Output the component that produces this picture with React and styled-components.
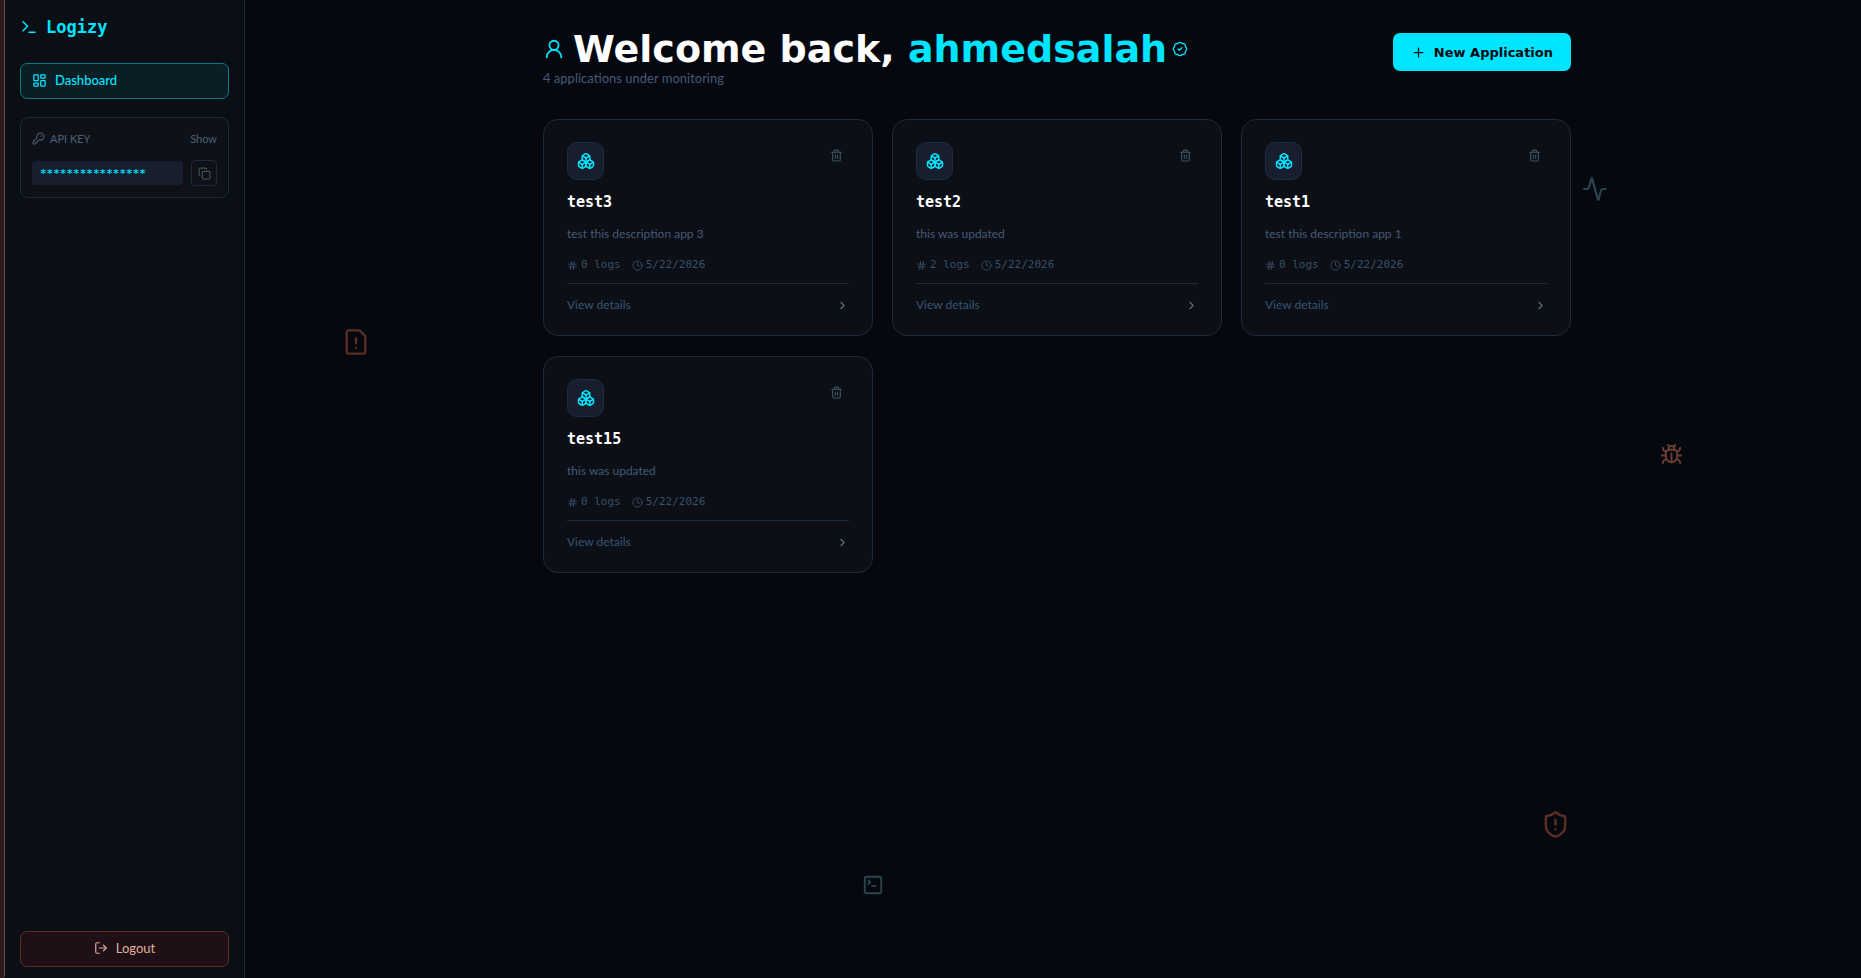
import React, { useState } from 'react';
import styled, { createGlobalStyle } from 'styled-components';
import {
  Activity,
  BadgeCheck,
  Boxes,
  Bug,
  ChevronRight,
  Clock,
  Copy,
  FileWarning,
  Hash,
  KeyRound,
  LayoutDashboard,
  LogOut,
  Plus,
  ShieldAlert,
  SquareTerminal,
  Terminal,
  Trash2,
  UserRound,
} from 'lucide-react';

const applications = [
  { id: 1, name: 'test3', description: 'test this description app 3', logs: 0, date: '5/22/2026' },
  { id: 2, name: 'test2', description: 'this was updated', logs: 2, date: '5/22/2026' },
  { id: 3, name: 'test1', description: 'test this description app 1', logs: 0, date: '5/22/2026' },
  { id: 4, name: 'test15', description: 'this was updated', logs: 0, date: '5/22/2026' },
];

const AppCard = ({ app }) => (
  <Card>
    <CardTop>
      <IconBox>
        <Boxes size={18} />
      </IconBox>
      <DeleteButton type='button' aria-label={`Delete ${app.name}`}>
        <Trash2 size={13} />
      </DeleteButton>
    </CardTop>
    <CardTitle>{app.name}</CardTitle>
    <Description>{app.description}</Description>
    <Meta>
      <MetaItem>
        <Hash size={11} />
        {app.logs} logs
      </MetaItem>
      <MetaItem>
        <Clock size={11} />
        {app.date}
      </MetaItem>
    </Meta>
    <DetailsLink href='#details'>
      View details
      <ChevronRight size={13} />
    </DetailsLink>
  </Card>
);

const App = () => {
  const [visible, setVisible] = useState(false);

  return (
    <>
      <GlobalStyle />
      <Page>
        <EdgeStrip />
        <Sidebar>
          <Logo>
            <Terminal size={18} />
            Logizy
          </Logo>
          <NavLink href='#dashboard'>
            <LayoutDashboard size={15} />
            Dashboard
          </NavLink>
          <KeyPanel>
            <KeyHeader>
              <KeyLabel htmlFor='api-key'>
                <KeyRound size={13} />
                API KEY
              </KeyLabel>
              <ShowButton type='button' onClick={() => setVisible(!visible)}>
                {visible ? 'Hide' : 'Show'}
              </ShowButton>
            </KeyHeader>
            <KeyRow>
              <KeyInput id='api-key' readOnly value='****************' />
              <CopyButton type='button' aria-label='Copy API key'>
                <Copy size={13} />
              </CopyButton>
            </KeyRow>
          </KeyPanel>
          <LogoutButton type='button'>
            <LogOut size={14} />
            Logout
          </LogoutButton>
        </Sidebar>

        <Main>
          <Content>
            <Header>
              <div>
                <Title>
                  <UserRound size={22} />
                  <TitleText>
                    Welcome back, <UserName>ahmedsalah</UserName>
                  </TitleText>
                  <BadgeCheck size={16} />
                </Title>
                <Subtitle>{applications.length} applications under monitoring</Subtitle>
              </div>
              <NewButton type='button'>
                <Plus size={15} />
                New Application
              </NewButton>
            </Header>
            <Grid>
              {applications.map((app) => (
                <AppCard key={app.id} app={app} />
              ))}
            </Grid>
          </Content>
        </Main>

        <Floating $x='18.4%' $y='33.5%' $color='#5c2f26'>
          <FileWarning size={28} />
        </Floating>
        <Floating $x='85%' $y='18%' $color='#2b444e'>
          <Activity size={26} />
        </Floating>
        <Floating $x='89.2%' $y='45.3%' $color='#6b3e34'>
          <Bug size={23} />
        </Floating>
        <Floating $x='82.8%' $y='82.8%' $color='#5c2f26'>
          <ShieldAlert size={29} />
        </Floating>
        <Floating $x='46.3%' $y='89.4%' $color='#2b444e'>
          <SquareTerminal size={22} />
        </Floating>
      </Page>
    </>
  );
};

const sans = "Lato, 'Open Sans', sans-serif";
const mono = "'DejaVu Sans Mono', 'Liberation Mono', monospace";
const wide = "'DejaVu Sans', Inter, sans-serif";

const GlobalStyle = createGlobalStyle`
  * {
    box-sizing: border-box;
  }

  body {
    margin: 0;
    background: #05080f;
    font-family: ${sans};
  }

  h1, h2, p {
    margin: 0;
  }

  button, input {
    font-family: inherit;
  }

  button {
    cursor: pointer;
  }

  svg {
    flex-shrink: 0;
  }
`;

const Page = styled.div`
  position: relative;
  display: flex;
  min-height: 100vh;
  overflow: hidden;
`;

const EdgeStrip = styled.div`
  width: 5px;
  background: #2e191b;
  border-right: 1px solid #6b4b4a;
  border-bottom-right-radius: 2px;
`;

const Sidebar = styled.aside`
  display: flex;
  flex-direction: column;
  width: 240px;
  padding: 15px;
  padding-bottom: 11px;
  background: #0a0f16;
  border-right: 1px solid #1b2a3d;
`;

const Logo = styled.div`
  display: flex;
  align-items: center;
  gap: 8px;
  height: 24px;
  margin-bottom: 24px;
  color: #00e5ff;
  font: 700 17px/24px ${mono};
`;

const NavLink = styled.a`
  display: flex;
  align-items: center;
  gap: 8px;
  height: 36px;
  margin-bottom: 18px;
  padding: 0 11px 2px;
  border: 1px solid #0b7684;
  border-radius: 7px;
  background: #0a1e24;
  color: #00e5ff;
  font-size: 13px;
  font-weight: 500;
  text-decoration: none;
`;

const KeyPanel = styled.section`
  padding: 10px 11px 11px;
  border: 1px solid #1b2a3d;
  border-radius: 8px;
  background: #0e1118;
`;

const KeyHeader = styled.div`
  display: flex;
  align-items: center;
  justify-content: space-between;
  height: 20px;
  margin-bottom: 12px;
`;

const KeyLabel = styled.label`
  display: flex;
  align-items: center;
  gap: 5px;
  color: #4a6075;
  font-size: 11px;
`;

const ShowButton = styled.button`
  padding: 0;
  border: none;
  background: none;
  color: #4a6075;
  font-size: 11px;
`;

const KeyRow = styled.div`
  display: flex;
  align-items: center;
  gap: 8px;
`;

const KeyInput = styled.input`
  flex: 1;
  min-width: 0;
  height: 24px;
  padding: 0 8px;
  border: none;
  border-radius: 4px;
  outline: none;
  background: #171f2e;
  color: #00d5ee;
  font-family: ${mono};
  font-size: 11px;
  font-weight: 700;
`;

const CopyButton = styled.button`
  display: flex;
  align-items: center;
  justify-content: center;
  width: 26px;
  height: 26px;
  padding: 0;
  border: 1px solid #1b2a3d;
  border-radius: 4px;
  background: none;
  color: #42555f;
`;

const LogoutButton = styled.button`
  display: flex;
  align-items: center;
  justify-content: center;
  gap: 8px;
  height: 36px;
  margin-top: auto;
  padding: 0 8px 2px;
  border: 1px solid #5f2f25;
  border-radius: 7px;
  background: #1e1016;
  color: #e0ae9c;
  font-size: 13px;
`;

const Main = styled.main`
  flex: 1;
  padding: 33px 32px 32px 40px;
`;

const Content = styled.div`
  max-width: 1028px;
  margin: 0 auto;
`;

const Header = styled.header`
  display: flex;
  align-items: flex-start;
  justify-content: space-between;
  margin-bottom: 32px;
`;

const Title = styled.h1`
  display: flex;
  align-items: center;
  gap: 5px;
  height: 32px;
  color: #fff;
  font: 700 38px/32px ${wide};
  white-space: nowrap;

  svg {
    color: #00e5ff;
  }
`;

const TitleText = styled.span`
  margin-left: 3px;
`;

const UserName = styled.span`
  color: #00e5ff;
`;

const Subtitle = styled.p`
  margin-top: 4px;
  color: #455a78;
  font-size: 13px;
  line-height: 18px;
`;

const NewButton = styled.button`
  display: flex;
  align-items: center;
  gap: 8px;
  height: 38px;
  padding: 0 18px;
  border: none;
  border-radius: 7px;
  background: #00e5ff;
  color: #05080f;
  font-family: ${wide};
  font-size: 13px;
  font-weight: 700;
  white-space: nowrap;
`;

const Grid = styled.div`
  display: grid;
  grid-template-columns: repeat(3, 1fr);
  gap: 20px 19px;
`;

const Card = styled.article`
  padding: 22px 23px 21px;
  border: 1px solid #1d2b3f;
  border-radius: 15px;
  background: #0c0f16;
`;

const CardTop = styled.div`
  display: flex;
  align-items: flex-start;
  justify-content: space-between;
`;

const IconBox = styled.div`
  display: flex;
  align-items: center;
  justify-content: center;
  width: 37px;
  height: 38px;
  border: 1px solid #1b2d42;
  border-radius: 10px;
  background: #171f2e;
  color: #00e5ff;
`;

const DeleteButton = styled.button`
  display: flex;
  padding: 7px 6px;
  border: none;
  background: none;
  color: #3f5566;
`;

const CardTitle = styled.h2`
  margin-top: 11px;
  color: #fff;
  font: 700 15px/22px ${mono};
`;

const Description = styled.p`
  margin-top: 12px;
  color: #455a78;
  font-size: 12px;
  line-height: 18px;
`;

const Meta = styled.div`
  display: flex;
  gap: 11px;
  margin-top: 14px;
  padding-bottom: 10px;
  border-bottom: 1px solid #1d2b3f;
  color: #3a4f68;
  font: 11px/16px ${mono};
`;

const MetaItem = styled.span`
  display: flex;
  align-items: center;
  gap: 3px;
`;

const DetailsLink = styled.a`
  display: flex;
  align-items: center;
  justify-content: space-between;
  margin-top: 12px;
  color: #385475;
  font-size: 12px;
  line-height: 18px;
  text-decoration: none;

  svg {
    color: #5a6f80;
  }
`;

/* decorative icons scattered behind the dashboard */
const Floating = styled.div`
  position: absolute;
  left: ${({ $x }) => $x};
  top: ${({ $y }) => $y};
  display: flex;
  color: ${({ $color }) => $color};
  pointer-events: none;
`;

export default App;
